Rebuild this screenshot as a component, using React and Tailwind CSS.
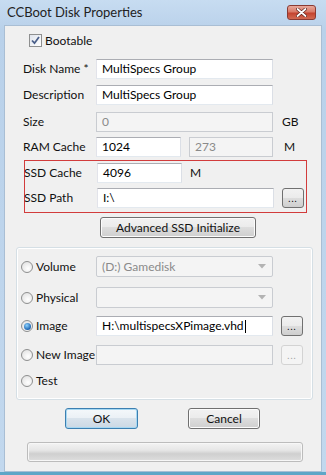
import React from 'react';

const font = { fontFamily: '"Segoe UI", Lato, "Noto Sans", sans-serif' };

const TextBox = ({ value, width = 'w-[177px]', disabled = false, caret = false }) => (
  <div
    className={`h-[20px] ${width} shrink-0 flex items-center px-[5px] border ${
      disabled
        ? 'border-[#c9ccd1] bg-[#f4f4f4] text-[#8a8a8a]'
        : 'border-[#abadb3] border-l-[#e2e3ea] border-r-[#dbdfe6] border-b-[#e3e9ef] bg-white text-black'
    }`}
  >
    <span className="leading-none whitespace-nowrap">{value}</span>
    {caret && <span className="ml-[1px] w-px h-[13px] bg-black" />}
  </div>
);

const ComboBox = ({ value }) => (
  <div className="h-[21px] w-[177px] shrink-0 flex items-center justify-between pl-[5px] pr-[6px] border border-[#c9ccd1] bg-[#f4f4f4] rounded-[2px] text-[#8a8a8a]">
    <span className="leading-none">{value}</span>
    <svg width="8" height="5" viewBox="0 0 8 5">
      <path d="M0 0 H8 L4 4.5 Z" fill="#b3b3b3" />
    </svg>
  </div>
);

const DotsButton = ({ disabled = false }) => (
  <div
    className={`ml-[8px] h-[20px] w-[22px] shrink-0 flex items-end justify-center pb-[4px] rounded-[3px] border ${
      disabled
        ? 'border-[#d3d3d3] bg-[#f4f4f4] text-[#a0a0a0]'
        : 'border-[#707070] bg-[linear-gradient(#f2f2f2_0%,#ebebeb_50%,#dddddd_50%,#cfcfcf_100%)] text-black'
    }`}
  >
    <span className="text-[9px] leading-none tracking-[1px]">...</span>
  </div>
);

const Row = ({ label, children, className = '' }) => (
  <div className={`flex items-center h-[20px] ${className}`}>
    <span className="w-[73px] shrink-0 leading-none whitespace-nowrap">{label}</span>
    {children}
  </div>
);

const Radio = ({ checked }) => (
  <div className="w-[12px] h-[12px] shrink-0 rounded-full border border-[#8e8f8f] bg-[radial-gradient(circle_at_60%_65%,#ffffff,#dcdcdc)] flex items-center justify-center">
    {checked && (
      <div className="w-[7px] h-[7px] rounded-full bg-[radial-gradient(circle_at_40%_35%,#8ed3ff,#1c64b0_70%,#0b3f7a)]" />
    )}
  </div>
);

const RadioRow = ({ label, checked, children, className = '' }) => (
  <div className={`flex items-center h-[20px] ${className}`}>
    <div className="w-[79px] shrink-0 flex items-center gap-[3px] pl-[4px]">
      <Radio checked={checked} />
      <span className="leading-none whitespace-nowrap">{label}</span>
    </div>
    {children}
  </div>
);

const PushButton = ({ label, primary = false, className = '' }) => (
  <div
    className={`h-[21px] flex items-center justify-center rounded-[3px] border ${
      primary
        ? 'border-[#3c7fb1] bg-[linear-gradient(#f4f8fb_0%,#eaf0f5_50%,#d9e3ec_50%,#cbd8e4_100%)] shadow-[inset_0_0_0_1px_#a7d8f2]'
        : 'border-[#707070] bg-[linear-gradient(#f2f2f2_0%,#ebebeb_50%,#dddddd_50%,#cfcfcf_100%)] shadow-[inset_0_0_0_1px_#fcfcfc]'
    } ${className}`}
  >
    <span className="leading-none">{label}</span>
  </div>
);

export default function App() {
  return (
    <div
      className="w-[326px] h-[475px] flex flex-col bg-[linear-gradient(#c7dcf1,#b9d1ea_30px,#c2d8ee)] border-b-[3px] border-[#5fa6c7] text-[12px] text-[#111]"
      style={font}
    >
      {/* Title bar */}
      <div className="h-[25px] shrink-0 flex items-start justify-between pl-[7px] pr-[10px]">
        <span className="mt-[6px] text-[13px] leading-none text-[#222]">CCBoot Disk Properties</span>
        <div className="mt-[5px] w-[29px] h-[15px] rounded-[3px] border border-[#8a3a33] bg-[linear-gradient(#e8a89b_0%,#d97a68_45%,#c4432f_55%,#d26a52_100%)] flex items-center justify-center">
          <svg width="11" height="9" viewBox="0 0 11 9">
            <path d="M1.5 1 L9.5 8 M9.5 1 L1.5 8" stroke="#5a1f18" strokeWidth="3.2" strokeLinecap="round" />
            <path d="M1.5 1 L9.5 8 M9.5 1 L1.5 8" stroke="#ffffff" strokeWidth="1.8" strokeLinecap="round" />
          </svg>
        </div>
      </div>

      {/* Client area */}
      <div className="flex-1 ml-[4px] mr-[4px] bg-[#f0f0f0] border border-[#a9bed4] flex flex-col pl-[18px] pr-[16px]">
        {/* Bootable */}
        <div className="mt-[8px] h-[13px] flex items-center gap-[3px] pl-[6px]">
          <div className="w-[13px] h-[13px] border border-[#8e8f8f] bg-[linear-gradient(135deg,#dfe4ec,#ffffff)] flex items-center justify-center">
            <svg width="9" height="9" viewBox="0 0 9 9">
              <path d="M1 4.5 L3.5 7.2 L8 1" fill="none" stroke="#4a5f8a" strokeWidth="1.8" />
            </svg>
          </div>
          <span className="leading-none">Bootable</span>
        </div>

        <Row label="Disk Name *" className="mt-[12px]">
          <TextBox value="MultiSpecs Group" />
        </Row>
        <Row label="Description" className="mt-[6px]">
          <TextBox value="MultiSpecs Group" />
        </Row>
        <Row label="Size" className="mt-[7px]">
          <TextBox value="0" disabled />
          <span className="ml-[9px] leading-none">GB</span>
        </Row>
        <Row label="RAM Cache" className="mt-[5px]">
          <TextBox value="1024" width="w-[85px]" />
          <div className="ml-[8px]">
            <TextBox value="273" width="w-[84px]" disabled />
          </div>
          <span className="ml-[11px] leading-none">M</span>
        </Row>

        {/* SSD box */}
        <div className="mt-[3px] ml-[1px] w-[283px] border border-[#d23c3c] pt-[2px] pb-[4px]">
          <Row label="SSD Cache" className="-ml-[1px]">
            <TextBox value="4096" width="w-[85px]" />
            <span className="ml-[8px] leading-none">M</span>
          </Row>
          <Row label="SSD Path" className="mt-[5px] -ml-[1px]">
            <TextBox value="I:\" />
            <DotsButton />
          </Row>
        </div>

        <div className="mt-[4px] flex">
          <PushButton label="Advanced SSD Initialize" className="ml-[77px] w-[156px]" />
        </div>

        {/* Source group */}
        <div className="mt-[9px] -ml-[7px] w-[297px] h-[153px] rounded-[3px] border border-[#d5dfe5] shadow-[inset_0_0_0_1px_#ffffff] flex flex-col pt-[8px]">
          <RadioRow label="Volume" className="h-[21px]">
            <ComboBox value="(D:) Gamedisk" />
          </RadioRow>
          <RadioRow label="Physical" className="mt-[10px] h-[21px]">
            <ComboBox value="" />
          </RadioRow>
          <RadioRow label="Image" checked className="mt-[8px]">
            <TextBox value="H:\multispecsXPimage.vhd" caret />
            <DotsButton />
          </RadioRow>
          <RadioRow label="New Image" className="mt-[9px]">
            <TextBox value="" disabled />
            <DotsButton disabled />
          </RadioRow>
          <RadioRow label="Test" className="mt-[6px]" />
        </div>

        <div className="mt-[8px] flex">
          <PushButton label="OK" primary className="ml-[42px] w-[73px]" />
          <PushButton label="Cancel" className="ml-[50px] w-[72px]" />
        </div>

        <div className="mt-[13px] ml-[4px] w-[276px] h-[20px] rounded-[3px] border border-[#bcbcbc] bg-[linear-gradient(#f3f3f3_0%,#e6e6e6_40%,#cfcfcf_60%,#dedede_100%)] shadow-[inset_0_0_0_1px_#f7f7f7]" />
      </div>
    </div>
  );
}
